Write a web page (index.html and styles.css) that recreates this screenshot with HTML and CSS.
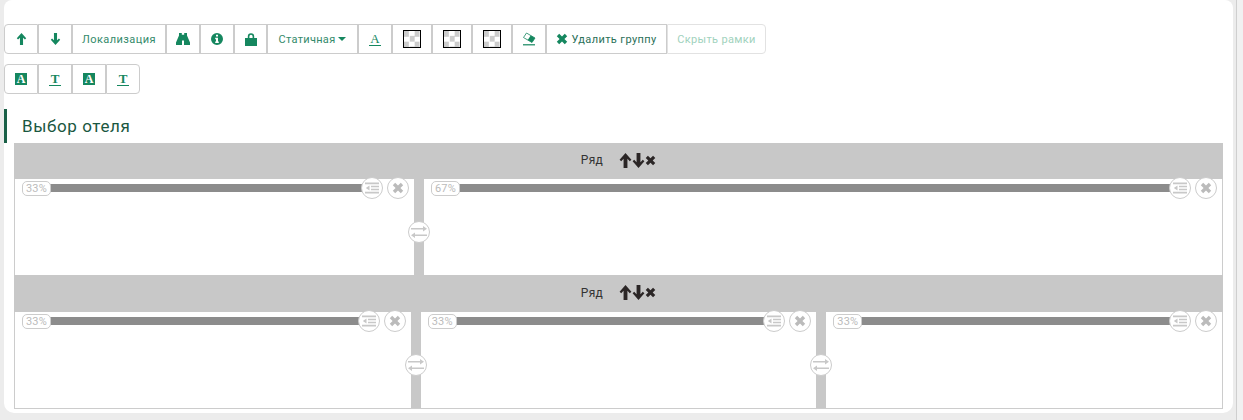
FILE: index.html
```html
<!DOCTYPE html>
<html lang="ru">
<head>
    <meta charset="UTF-8">
    <title>Выбор отеля</title>
    <link rel="stylesheet" href="styles.css">
</head>
<body>
    <!-- Иконки -->
    <svg class="sprite" width="0" height="0">
        <symbol id="i-up" viewBox="0 0 12 14"><path d="M6 0 11.500 6.200 10 7.600 7.800 5.400V14H4.200V5.400L2 7.600 .5 6.200Z"/></symbol>
        <symbol id="i-down" viewBox="0 0 12 14"><path d="M6 14 .5 7.800 2 6.400 4.200 8.600V0H7.800V8.600L10 6.400 11.500 7.800Z"/></symbol>
        <symbol id="i-x" viewBox="0 0 12 12"><path d="M3.200 .8 6 3.600 8.800 .8 11.200 3.200 8.400 6 11.200 8.800 8.800 11.200 6 8.400 3.200 11.200 .8 8.800 3.600 6 .8 3.200Z"/></symbol>
        <symbol id="i-binoculars" viewBox="0 0 14 12"><path d="M3 0H5.800V1.800H8.200V0H11V2.500L14 9.500V12H8V7.500H6V12H0V9.500L3 2.500Z"/></symbol>
        <symbol id="i-info" viewBox="0 0 12 12"><path fill-rule="evenodd" d="M6 0a6 6 0 1 0 0 12A6 6 0 0 0 6 0ZM5 1.800H7V3.600H5ZM4.200 4.800H7V8.500H7.800V10H4.200V8.500H5V6.300H4.200Z"/></symbol>
        <symbol id="i-lock" viewBox="0 0 12 13"><path fill-rule="evenodd" d="M2.800 5V3.400a3.200 3.200 0 0 1 6.400 0V5H12V13H0V5ZM4.400 5H7.600V3.400a1.600 1.600 0 0 0-3.200 0Z"/></symbol>
        <symbol id="i-eraser" viewBox="0 0 14 14"><path d="M4.500 1 13 6 10 10.500 1.500 5.500Z" fill="#fff" stroke="currentColor" stroke-width=".8"/><path d="M8.700 3.500 13 6 10 10.500 5.700 8Z"/><rect x="1" y="12.200" width="12" height="1.200"/></symbol>
        <symbol id="i-outdent" viewBox="0 0 14 12"><path d="M0 .5H14V2.200H0ZM6 3.700H14V5.200H6ZM6 6.700H14V8.200H6ZM0 9.800H14V11.500H0ZM4.500 3.500V8.500L.8 6Z"/></symbol>
        <symbol id="i-exchange" viewBox="0 0 16 12"><path d="M0 2H12V0L16 2.800 12 5.500V3.500H0ZM16 10H4V12L0 9.200 4 6.500V8.500H16Z"/></symbol>
    </svg>

    <div class="panel">
        <div class="toolbar">
            <button class="btn btn-icon"><svg class="ic"><use href="#i-up"/></svg></button>
            <button class="btn btn-icon"><svg class="ic"><use href="#i-down"/></svg></button>
            <button class="btn btn-text">Локализация</button>
            <button class="btn btn-icon"><svg class="ic ic-wide"><use href="#i-binoculars"/></svg></button>
            <button class="btn btn-icon"><svg class="ic ic-round"><use href="#i-info"/></svg></button>
            <button class="btn btn-icon btn-lock"><svg class="ic ic-lock"><use href="#i-lock"/></svg></button>
            <button class="btn btn-text btn-static">Статичная <span class="caret"></span></button>
            <button class="btn btn-icon"><span class="letter letter-thin">A</span></button>
            <button class="btn btn-swatch"><span class="swatch"></span></button>
            <button class="btn btn-swatch"><span class="swatch"></span></button>
            <button class="btn btn-swatch"><span class="swatch"></span></button>
            <button class="btn btn-icon"><svg class="ic ic-eraser"><use href="#i-eraser"/></svg></button>
            <button class="btn btn-text btn-del"><svg class="ic"><use href="#i-x"/></svg> Удалить группу</button>
            <button class="btn btn-text btn-off">Скрыть рамки</button>
        </div>
        <div class="toolbar">
            <button class="btn btn-icon"><span class="letter-box">A</span></button>
            <button class="btn btn-icon"><span class="letter">T</span></button>
            <button class="btn btn-icon"><span class="letter-box">A</span></button>
            <button class="btn btn-icon"><span class="letter">T</span></button>
        </div>

        <h2 class="title">Выбор отеля</h2>

        <div class="rows">
            <div class="row-head">
                <span class="row-name">Ряд</span>
                <span class="row-tools">
                    <svg class="rt"><use href="#i-up"/></svg><svg class="rt"><use href="#i-down"/></svg><svg class="rt rt-x"><use href="#i-x"/></svg>
                </span>
            </div>
            <div class="row-body">
                <div class="col col-33">
                    <span class="pct">33%</span>
                    <span class="col-bar"></span>
                    <span class="round"><svg class="ri"><use href="#i-outdent"/></svg></span>
                    <span class="round"><svg class="ri ri-x"><use href="#i-x"/></svg></span>
                </div>
                <div class="gutter"><span class="round handle"><svg class="ri ri-ex"><use href="#i-exchange"/></svg></span></div>
                <div class="col col-67">
                    <span class="pct">67%</span>
                    <span class="col-bar"></span>
                    <span class="round"><svg class="ri"><use href="#i-outdent"/></svg></span>
                    <span class="round"><svg class="ri ri-x"><use href="#i-x"/></svg></span>
                </div>
            </div>

            <div class="row-head row-head-2">
                <span class="row-name">Ряд</span>
                <span class="row-tools">
                    <svg class="rt"><use href="#i-up"/></svg><svg class="rt"><use href="#i-down"/></svg><svg class="rt rt-x"><use href="#i-x"/></svg>
                </span>
            </div>
            <div class="row-body row-body-last">
                <div class="col col-third">
                    <span class="pct">33%</span>
                    <span class="col-bar"></span>
                    <span class="round"><svg class="ri"><use href="#i-outdent"/></svg></span>
                    <span class="round"><svg class="ri ri-x"><use href="#i-x"/></svg></span>
                </div>
                <div class="gutter"><span class="round handle"><svg class="ri ri-ex"><use href="#i-exchange"/></svg></span></div>
                <div class="col col-third">
                    <span class="pct">33%</span>
                    <span class="col-bar"></span>
                    <span class="round"><svg class="ri"><use href="#i-outdent"/></svg></span>
                    <span class="round"><svg class="ri ri-x"><use href="#i-x"/></svg></span>
                </div>
                <div class="gutter"><span class="round handle"><svg class="ri ri-ex"><use href="#i-exchange"/></svg></span></div>
                <div class="col col-third">
                    <span class="pct">33%</span>
                    <span class="col-bar"></span>
                    <span class="round"><svg class="ri"><use href="#i-outdent"/></svg></span>
                    <span class="round"><svg class="ri ri-x"><use href="#i-x"/></svg></span>
                </div>
            </div>
        </div>
    </div>
    <div class="scrollbar"></div>
</body>
</html>
```

FILE: styles.css
```css
html, body {
    height: 100%;
}
body {
    margin: 0;
    background-color: #ececec;
    font-family: Roboto, "Open Sans", sans-serif;
    overflow: hidden;
    display: flex;
    align-items: flex-start;
    padding-left: 4px;
    box-sizing: border-box;
}
.sprite {
    position: absolute;
}
.panel {
    width: 1229px;
    height: 413px;
    flex: none;
    box-sizing: border-box;
    background-color: #fff;
    border-radius: 8px 8px 10px 10px;
    padding-top: 24px;
}
.scrollbar {
    flex: none;
    width: 6px;
    height: 100%;
    margin-left: 3px;
    background-color: #f1f1f1;
    border-left: 1px solid #cfcfcf;
}

/* Botones */
.toolbar {
    display: flex;
    height: 30px;
    margin-bottom: 10px;
}
.btn {
    flex: none;
    display: flex;
    align-items: center;
    justify-content: center;
    box-sizing: border-box;
    height: 30px;
    padding: 0;
    margin: 0;
    background-color: #fff;
    border: 1px solid #ccc;
    color: #15875f;
    font-family: inherit;
    font-size: 11px;
    letter-spacing: .45px;
}
.btn:first-child {
    border-radius: 4px 0 0 4px;
}
.btn:last-child {
    border-radius: 0 4px 4px 0;
}
.btn-icon {
    width: 34px;
}
.btn-lock {
    width: 33px;
}
.btn-text {
    width: 94px;
    color: #338a6b;
}
.btn-static {
    width: 91px;
    letter-spacing: .3px;
}
.btn-swatch {
    width: 40px;
}
.btn-del {
    width: 121px;
    color: #2a6f58;
    letter-spacing: .4px;
}
.btn-del .ic {
    width: 12px;
    height: 12px;
    margin-right: 3px;
    color: #15875f;
}
.btn-off {
    width: 99px;
    color: #9fd2bd;
    border-color: #e2e2e2;
    letter-spacing: .35px;
}
.ic {
    width: 11px;
    height: 12px;
    fill: currentColor;
}
.ic-wide {
    width: 14px;
    height: 12px;
}
.ic-round {
    width: 12px;
}
.ic-lock {
    width: 12px;
    height: 13px;
}
.ic-eraser {
    width: 14px;
    height: 14px;
}
.caret {
    display: inline-block;
    margin-left: 3px;
    vertical-align: 2px;
    border-top: 4px solid #15875f;
    border-left: 4px solid transparent;
    border-right: 4px solid transparent;
}
.letter {
    display: block;
    width: 12px;
    font-family: "Liberation Serif", serif;
    font-weight: bold;
    font-size: 13px;
    line-height: 12px;
    letter-spacing: 0;
    text-align: center;
    border-bottom: 1px solid #15875f;
}
.letter-thin {
    font-weight: normal;
}
.letter-box {
    display: block;
    width: 12px;
    height: 12px;
    background-color: #15875f;
    color: #fff;
    font-family: "Liberation Serif", serif;
    font-weight: bold;
    font-size: 12px;
    line-height: 12px;
    letter-spacing: 0;
    text-align: center;
}
.swatch {
    display: block;
    box-sizing: border-box;
    width: 18px;
    height: 18px;
    border: 1px solid #000;
    background-color: #fff;
    background-image: conic-gradient(#fff 25%, #ccc 0 50%, #fff 0 75%, #ccc 0);
    background-size: 10.670px 10.670px;
}

.title {
    margin: 15px 0 0;
    height: 34px;
    line-height: 35px;
    box-sizing: border-box;
    padding-left: 15px;
    border-left: 3px solid #1a6047;
    color: #1a5741;
    font-size: 17px;
    font-weight: 400;
    letter-spacing: .6px;
}

/* Filas */
.rows {
    margin: 0 10px;
}
.row-head {
    height: 36px;
    background-color: #c8c8c8;
    display: flex;
    align-items: center;
    justify-content: center;
    padding-bottom: 2px;
    box-sizing: border-box;
    color: #333;
    font-size: 12px;
}
.row-head-2 {
    height: 37px;
}
.row-name {
    letter-spacing: .3px;
}
.row-tools {
    display: flex;
    margin-left: 16px;
}
.rt {
    width: 13px;
    height: 15px;
    fill: #2b2626;
}
.rt-x {
    width: 11px;
}
.row-body {
    display: flex;
    box-sizing: border-box;
    height: 96px;
    border-left: 1px solid #ccc;
    border-right: 1px solid #ccc;
}
.row-body-last {
    height: 97px;
    border-bottom: 1px solid #ccc;
}
.col {
    display: flex;
    align-items: center;
    align-self: flex-start;
    min-width: 0;
    box-sizing: border-box;
    height: 22px;
    padding: 0 5px 0 7px;
    margin-top: -2px;
}
.col-33 {
    width: 399px;
}
.col-67 {
    flex: 1;
}
.col-third {
    flex: 1;
}
.gutter {
    flex: none;
    width: 10px;
    background-color: #c8c8c8;
    position: relative;
}
.pct {
    flex: none;
    box-sizing: border-box;
    width: 29px;
    height: 15px;
    line-height: 13px;
    text-align: center;
    background-color: #fff;
    border: 1px solid #ccc;
    border-radius: 5px;
    color: #bbb;
    font-size: 11px;
    letter-spacing: .2px;
    position: relative;
    z-index: 1;
}
.col-bar {
    flex: 1;
    height: 8px;
    margin-left: -1px;
    margin-right: -11px;
    background-color: #8c8c8c;
}
.round {
    flex: none;
    box-sizing: border-box;
    width: 22px;
    height: 22px;
    margin-left: 4px;
    display: flex;
    align-items: center;
    justify-content: center;
    background-color: #fff;
    border: 1px solid #ccc;
    border-radius: 50%;
    position: relative;
}
.col-bar + .round {
    margin-left: 0;
}
.ri {
    width: 14px;
    height: 12px;
    fill: #c8c8c8;
}
.ri-x {
    fill: #bbb;
    width: 12px;
}
.ri-ex {
    width: 16px;
}
.handle {
    position: absolute;
    left: -6px;
    top: 42px;
    margin: 0;
}
```
